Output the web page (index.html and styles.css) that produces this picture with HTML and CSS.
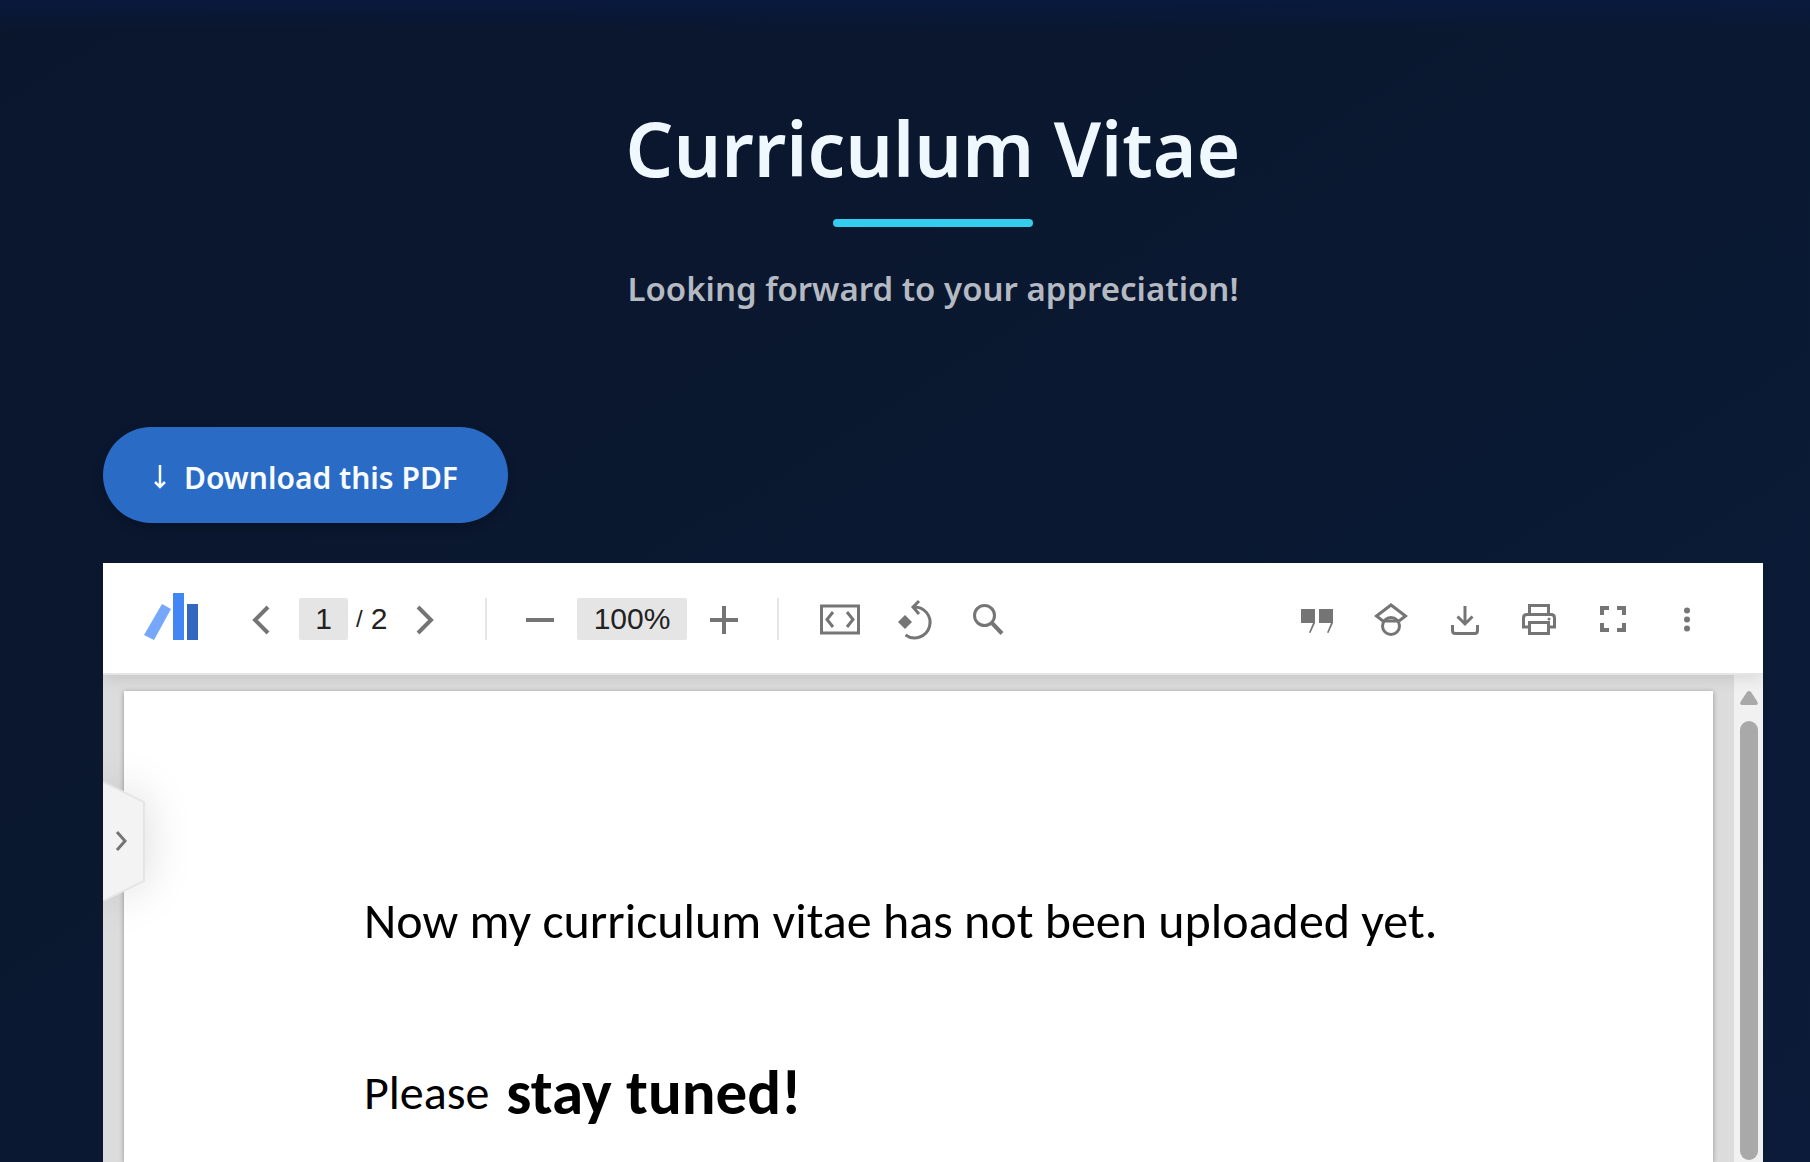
FILE: index.html
```html
<!DOCTYPE html>
<html lang="en">
<head>
<meta charset="utf-8">
<meta name="viewport" content="width=device-width, initial-scale=1">
<title>Curriculum Vitae</title>
<link rel="stylesheet" href="styles.css">
</head>
<body>
<main class="page">
  <header class="intro">
    <h1 class="intro-title">Curriculum Vitae</h1>
    <div class="intro-rule"></div>
    <p class="intro-text">Looking forward to your appreciation!</p>
  </header>

  <a class="download" href="#">
    <svg class="download-arrow" viewBox="0 0 12 26" aria-hidden="true"><path d="M6 1v22M1 18l5 5 5-5" fill="none" stroke="currentColor" stroke-width="2.500"/></svg>
    <span>Download this PDF</span>
  </a>

  <section class="viewer" aria-label="PDF reader">
    <div class="toolbar">
      <svg class="logo" viewBox="0 0 56 48" aria-hidden="true">
        <path d="M19 9l9 5L11 45l-10-5z" fill="#76a7fa"/>
        <path d="M30 -2h11v47H30z" fill="#4285f4"/>
        <path d="M44 9h11v36H44z" fill="#3367c0"/>
      </svg>
      <div class="group pager">
        <button class="tool" type="button" aria-label="Previous page"><svg viewBox="0 0 48 48"><path d="M31 12L18 25l13 13" class="line w4"/></svg></button>
        <input class="field field-page" type="text" value="1" aria-label="Page number">
        <span class="count"><span class="slash">/</span> <span>2</span></span>
        <button class="tool" type="button" aria-label="Next page"><svg viewBox="0 0 48 48"><path d="M17 12l13 13-13 13" class="line w4"/></svg></button>
      </div>
      <div class="divider"></div>
      <div class="group zoom">
        <button class="tool" type="button" aria-label="Zoom out"><svg viewBox="0 0 48 48"><path d="M10 25h28" class="line w4"/></svg></button>
        <input class="field field-zoom" type="text" value="100%" aria-label="Zoom level">
        <button class="tool" type="button" aria-label="Zoom in"><svg viewBox="0 0 48 48"><path d="M10 25h28M24 11v28" class="line w4"/></svg></button>
      </div>
      <div class="divider"></div>
      <div class="group actions">
        <button class="tool" type="button" aria-label="Fit to width"><svg viewBox="0 0 48 48"><path d="M5.500 11h37v27h-37z" class="line w3"/><path d="M17 17l-6 7.500 6 7.500M31 17l6 7.500-6 7.500" class="line w3"/></svg></button>
        <button class="tool" type="button" aria-label="Rotate"><svg viewBox="0 0 48 48"><path d="M8 27l7-7 7 7-7 7z" fill="currentColor"/><path d="M15.500 40A15.500 15.500 0 1 0 23 12M29 6l-6 6 6 7" class="line w3"/></svg></button>
        <button class="tool" type="button" aria-label="Search"><svg viewBox="0 0 48 48"><circle cx="20.500" cy="20.500" r="10" class="line w3"/><path d="M27 27l11 11.500" class="line w4"/></svg></button>
      </div>
      <div class="group end">
        <button class="tool" type="button" aria-label="Cite"><svg viewBox="0 0 48 48"><path d="M8 14h14v14L17.500 38l-1.500-.5L20 28H8zM26 14h14v14L35.500 38l-1.500-.5L38 28H26z" fill="currentColor"/></svg></button>
        <button class="tool" type="button" aria-label="Scholar page"><svg viewBox="0 0 48 48"><path d="M16 26L9.500 21 24 10l14.500 11-6.500 5M16 26h16" class="line w3"/><circle cx="24" cy="31" r="8.500" class="line w3"/></svg></button>
        <button class="tool" type="button" aria-label="Download"><svg viewBox="0 0 48 48"><path d="M24 11v18M16.500 21.500L24 29l7.500-7.500M11.500 30v5.500q0 3 3 3h19q3 0 3-3V30" class="line w3"/></svg></button>
        <button class="tool" type="button" aria-label="Print"><svg viewBox="0 0 48 48"><path d="M14.500 20v-9.500h19V20M14 32H8.500V23q0-3.500 3.500-3.500h24q3.500 0 3.500 3.500v9H34M14.500 27.500h19v11h-19z" class="line w3"/><circle cx="34" cy="24" r="1.500" fill="currentColor"/></svg></button>
        <button class="tool" type="button" aria-label="Full screen"><svg viewBox="0 0 48 48"><path d="M13 20v-7h7M28 13h7v7M35 28v7h-7M20 35h-7v-7" class="line w4"/></svg></button>
        <button class="tool" type="button" aria-label="More"><svg viewBox="0 0 48 48"><g fill="currentColor"><circle cx="24" cy="15.500" r="3"/><circle cx="24" cy="24.500" r="3"/><circle cx="24" cy="33.500" r="3"/></g></svg></button>
      </div>
    </div>

    <div class="stage">
      <article class="sheet">
        <p class="line-one">Now my curriculum vitae has not been uploaded yet.</p>
        <p class="line-two"><span>Please</span> <strong>stay tuned!</strong></p>
      </article>
      <div class="track" aria-hidden="true">
        <svg class="track-arrow" viewBox="0 0 18 14"><path d="M7 1q2-2 4 0l6 9q2 4-1 4H2q-3 0-1-4z" fill="#a9a9a9"/></svg>
        <div class="thumb"></div>
      </div>
      <button class="drawer" type="button" aria-label="Open outline">
        <svg viewBox="0 0 42 120"><path d="M0 1l41 20v79L0 120z" fill="#f3f3f3"/><path d="M0 1l41 20v79L0 120" fill="none" stroke="#e5e5e5" stroke-width="2"/><path d="M14 51l8 9-8 9" class="line w3"/></svg>
      </button>
    </div>
  </section>
</main>
</body>
</html>
```
FILE: styles.css
```css
* { box-sizing: border-box; }

body {
  margin: 0;
  font-family: "Noto Sans", "Open Sans", sans-serif;
  color: #f0f8ff;
  background:
    linear-gradient(to bottom, rgba(8, 26, 68, 0.7), rgba(8, 26, 68, 0) 32px),
    linear-gradient(to bottom right, #0a162c, #0a1831 50%, #0b1b39);
}

.page {
  display: flex;
  flex-direction: column;
  align-items: flex-start;
  height: 100vh;
  padding: 0 47px 0 103px;
  overflow: hidden;
}

.intro {
  display: flex;
  flex-direction: column;
  align-items: center;
  align-self: stretch;
  padding-top: 92px;
}

.intro-title {
  margin: 0;
  font-size: 75px;
  font-weight: 600;
  line-height: 112px;
}

.intro-rule {
  width: 200px;
  height: 8px;
  margin-top: 15px;
  border-radius: 4px;
  background: #33ceee;
}

.intro-text {
  margin: 36px 0 0;
  font-size: 33px;
  font-weight: 600;
  line-height: 52px;
  color: #b5b9c1;
}

.download {
  display: flex;
  align-items: center;
  gap: 18px;
  height: 96px;
  margin-top: 112px;
  padding: 4px 50px 0 51px;
  border-radius: 48px;
  font-size: 30px;
  font-weight: 600;
  color: #f8fbff;
  text-decoration: none;
  background: #2a6bc5;
  box-shadow: 0 4px 12px rgba(0, 0, 0, 0.2);
}

.download-arrow { width: 12px; height: 26px; }

.viewer {
  display: flex;
  flex: 1;
  flex-direction: column;
  align-self: stretch;
  min-height: 0;
  margin-top: 40px;
  background: #dcdcdc;
}

.toolbar {
  z-index: 1;
  display: flex;
  align-items: center;
  height: 112px;
  padding: 2px 52px 0 40px;
  border-bottom: 2px solid #e5e5e5;
  font-family: "Liberation Sans", Arial, sans-serif;
  font-size: 30px;
  color: #222;
  background: #fff;
  box-shadow: 0 2px 16px rgba(0, 0, 0, 0.12);
  clip-path: inset(0 0 -24px 0);
}

.logo { width: 56px; height: 48px; overflow: visible; }
.group { display: flex; align-items: center; }
.pager { margin: 0 36px 0 38px; }
.zoom { gap: 13px; margin: 0 29px; }
.actions { gap: 26px; margin-left: 37px; }
.end { gap: 26px; margin-left: auto; }

.tool {
  width: 48px;
  height: 48px;
  padding: 0;
  border: 0;
  color: #757575;
  background: none;
}

.tool svg, .drawer svg { display: block; width: 100%; height: 100%; }
.line { fill: none; stroke: #757575; }
.w3 { stroke-width: 3; }
.w4 { stroke-width: 4; }

.field {
  height: 42px;
  padding: 0;
  border: 0;
  border-radius: 2px;
  font: inherit;
  color: inherit;
  text-align: center;
  background: #e5e5e5;
}

.field-page { width: 49px; margin-left: 14px; }
.field-zoom { width: 110px; }

.count {
  display: flex;
  align-items: center;
  gap: 8px;
  width: 53px;
  padding-left: 8px;
}

.slash { font-size: 24px; }

.divider { width: 2px; height: 42px; background: #e5e5e5; }

.stage {
  position: relative;
  display: flex;
  flex: 1;
  min-height: 0;
}

.sheet {
  flex: 1;
  margin: 16px 21px 0;
  padding: 198px 0 0 240px;
  font-family: Carlito, Lato, sans-serif;
  color: #000;
  background: #fff;
  box-shadow: 0 1px 5px rgba(0, 0, 0, 0.35);
}

.line-one { margin: 0; font-size: 50px; line-height: 64px; }

.line-two {
  display: flex;
  align-items: center;
  gap: 17px;
  margin: 104px 0 0;
  font-size: 48px;
  line-height: 72px;
}

.line-two strong { font-size: 63px; }

.track {
  display: flex;
  flex-direction: column;
  gap: 16px;
  width: 29px;
  padding: 16px 5px 2px 6px;
  background: #f1f1f1;
}

.track-arrow { width: 18px; height: 14px; }
.thumb { flex: 1; border-radius: 9px; background: #a9a9a9; }

.drawer {
  position: absolute;
  top: 106px;
  left: 0;
  width: 42px;
  height: 120px;
  padding: 0;
  border: 0;
  background: none;
  filter: drop-shadow(4px 0 20px rgba(0, 0, 0, 0.12));
  clip-path: inset(-60px -80px -60px 0);
}
```
